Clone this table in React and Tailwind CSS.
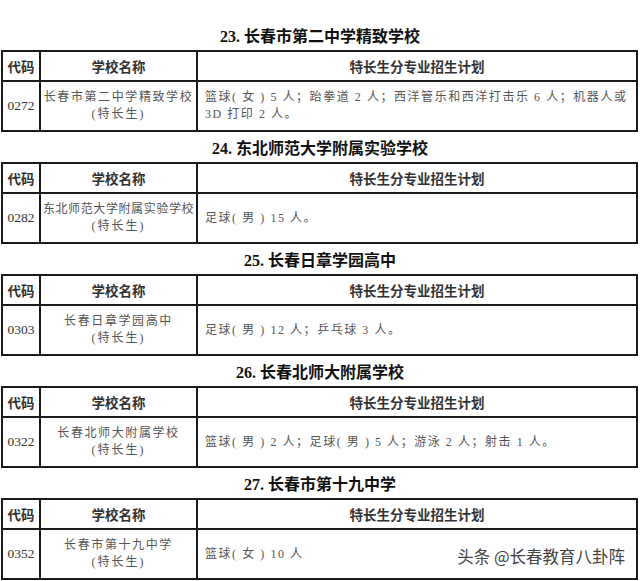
import React from "react"

const serif = "font-['Liberation_Serif','Noto_Sans_CJK_SC',serif]"
const sans = "font-['Noto_Sans_CJK_SC','Liberation_Sans',sans-serif]"

const schools = [
  {
    title: "23. 长春市第二中学精致学校",
    code: "0272",
    name: "长春市第二中学精致学校",
    plan: ["篮球( 女 ) 5 人；跆拳道 2 人；西洋管乐和西洋打击乐 6 人；机器人或", "3D 打印 2 人。"],
  },
  {
    title: "24. 东北师范大学附属实验学校",
    code: "0282",
    name: "东北师范大学附属实验学校",
    tight: true,
    plan: ["足球( 男 ) 15 人。"],
  },
  {
    title: "25. 长春日章学园高中",
    code: "0303",
    name: "长春日章学园高中",
    plan: ["足球( 男 ) 12 人；乒乓球 3 人。"],
  },
  {
    title: "26. 长春北师大附属学校",
    code: "0322",
    name: "长春北师大附属学校",
    plan: ["篮球( 男 ) 2 人；足球( 男 ) 5 人；游泳 2 人；射击 1 人。"],
  },
  {
    title: "27. 长春市第十九中学",
    code: "0352",
    name: "长春市第十九中学",
    plan: ["篮球( 女 ) 10 人"],
  },
]

function SchoolTable({ school }) {
  return (
    <section className="mt-[4px] first:mt-0">
      <h2 className={`h-[26px] flex items-center justify-center text-[16px] font-bold text-[#111] ${serif}`}>
        {school.title}
      </h2>
      <div className="ml-[1px] w-[637px] border-2 border-[#1a1a1a]">
        <div className={`grid grid-cols-[38px_157px_1fr] h-[30px] border-b-2 border-[#1a1a1a] text-[13.5px] font-bold text-[#333] ${sans}`}>
          <div className="flex items-center justify-center border-r-2 border-[#1a1a1a]">代码</div>
          <div className="flex items-center justify-center border-r-2 border-[#1a1a1a]">学校名称</div>
          <div className="flex items-center justify-center">特长生分专业招生计划</div>
        </div>
        <div className={`grid grid-cols-[38px_157px_1fr] h-[48px] text-[#555] ${serif}`}>
          <div className="flex items-center justify-center border-r-2 border-[#1a1a1a] text-[13.5px] text-[#333]">
            {school.code}
          </div>
          <div className="flex flex-col items-center justify-center border-r-2 border-[#1a1a1a] text-[12px] leading-[17px] whitespace-nowrap">
            <span className={school.tight ? "tracking-[0.6px]" : "tracking-[1.6px]"}>{school.name}</span>
            <span className="tracking-[2px]">(特长生)</span>
          </div>
          <div className="flex flex-col justify-center pl-[7px] text-[12px] leading-[17px] tracking-[1.55px] whitespace-nowrap">
            {school.plan.map((line) => (
              <span key={line}>{line}</span>
            ))}
          </div>
        </div>
      </div>
    </section>
  )
}

export default function App() {
  return (
    <div className="relative w-[640px] h-[581px] overflow-hidden bg-white pt-[24px]">
      {schools.map((s) => (
        <SchoolTable key={s.code} school={s} />
      ))}
      <div className={`absolute right-[15px] bottom-[12px] text-[16.5px] text-[#444] ${sans} [text-shadow:0_0_2px_#fff]`}>
        头条 @长春教育八卦阵
      </div>
    </div>
  )
}
